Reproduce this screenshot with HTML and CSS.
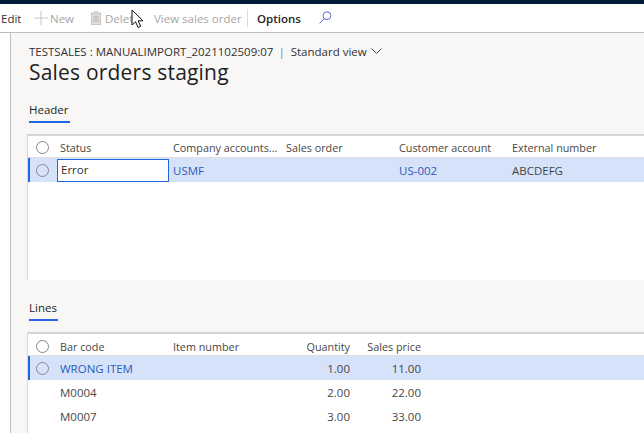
FILE: index.html
```html
<!DOCTYPE html>
<html lang="en">
<head>
    <meta charset="UTF-8">
    <title>Sales orders staging</title>
    <link rel="stylesheet" href="styles.css">
</head>
<body>
<div class="topBar"></div>
<div class="toolbar">
    <span class="toolItem editItem">Edit</span>
    <span class="toolItem newItem disabled">
        <svg class="plusIcon" width="14" height="14" viewBox="0 0 14 14"><path d="M7 0V14M0 7H14" stroke="#c8c6c4" stroke-width="1" fill="none"/></svg>
        New
    </span>
    <span class="toolItem deleteItem disabled">
        <svg class="binIcon" width="12" height="14" viewBox="0 0 12 14"><path d="M4 0.5H8M0.5 2H11.5" stroke="#c8c6c4" fill="none"/><rect x="1.5" y="2.5" width="9" height="11" fill="#e3e2e0" stroke="#c8c6c4"/><path d="M4 4.5V11.5M6 4.5V11.5M8 4.5V11.5" stroke="#b8b6b4" fill="none"/></svg>
        Delete
    </span>
    <span class="toolItem viewItem disabled">View sales order</span>
    <span class="toolDivider"></span>
    <span class="toolItem optionsItem">Options</span>
    <svg class="searchIcon" width="13" height="13" viewBox="0 0 13 13"><circle cx="8" cy="4.7" r="3.9" stroke="#5a6fd8" fill="none"/><path d="M5.2 7.6L0.6 12.4" stroke="#5a6fd8" fill="none"/></svg>
</div>
<div class="pageBody">
    <div class="content">
        <div class="breadcrumb">
            <span>TESTSALES : MANUALIMPORT_2021102509:07</span>
            <span class="crumbBar">|</span>
            <span>Standard view</span>
            <svg width="11" height="6" viewBox="0 0 11 6"><path d="M0.5 0.5L5.5 5.5L10.5 0.5" stroke="#444" fill="none"/></svg>
        </div>
        <h1 class="pageTitle">Sales orders staging</h1>

        <div class="tabHead headerTab"><span class="tabLabel">Header</span></div>
        <div class="grid headerGrid">
            <div class="gridRow headRow">
                <span class="radio"></span>
                <span class="cell w113">Status</span>
                <span class="cell w113">Company accounts...</span>
                <span class="cell w113">Sales order</span>
                <span class="cell w113">Customer account</span>
                <span class="cell">External number</span>
            </div>
            <div class="gridRow activeRow">
                <span class="radio"></span>
                <span class="cell w113"><span class="editBox">Error</span></span>
                <span class="cell w113 link">USMF</span>
                <span class="cell w113"></span>
                <span class="cell w113 link">US-002</span>
                <span class="cell">ABCDEFG</span>
            </div>
        </div>

        <div class="tabHead linesTab"><span class="tabLabel">Lines</span></div>
        <div class="grid linesGrid">
            <div class="gridRow headRow">
                <span class="radio"></span>
                <span class="cell w113">Bar code</span>
                <span class="cell w113">Item number</span>
                <span class="cell qty">Quantity</span>
                <span class="cell price">Sales price</span>
            </div>
            <div class="gridRow activeRow">
                <span class="radio"></span>
                <span class="cell w113 link">WRONG ITEM</span>
                <span class="cell w113"></span>
                <span class="cell qty">1.00</span>
                <span class="cell price">11.00</span>
            </div>
            <div class="gridRow">
                <span class="radioSpace"></span>
                <span class="cell w113">M0004</span>
                <span class="cell w113"></span>
                <span class="cell qty">2.00</span>
                <span class="cell price">22.00</span>
            </div>
            <div class="gridRow">
                <span class="radioSpace"></span>
                <span class="cell w113">M0007</span>
                <span class="cell w113"></span>
                <span class="cell qty">3.00</span>
                <span class="cell price">33.00</span>
            </div>
        </div>
    </div>
</div>
<svg class="cursor" width="14" height="21" viewBox="0 0 14 21"><path d="M1 1V16L4.6 12.8L7 18.5L9.6 17.4L7.2 11.8H12Z" fill="#fff" stroke="#111" stroke-width="1"/></svg>
</body>
</html>
```

FILE: styles.css
```css
html, body {
    margin: 0;
    padding: 0;
    height: 433px;
    overflow: hidden;
}

body {
    font-family: 'Open Sans', 'Liberation Sans', sans-serif;
    font-size: 10.8px;
    color: #323130;
    background-color: #fff;
    position: relative;
}

.topBar {
    height: 4px;
    background-color: #001a38;
}

.toolbar {
    height: 28px;
    display: flex;
    align-items: center;
    border-bottom: 1px solid #bdbdbd;
    background-color: #fff;
    white-space: nowrap;
    font-size: 11.5px;
}

.toolItem {
    display: flex;
    align-items: center;
}

.disabled {
    color: #a6a6a6;
}

.editItem {
    margin-left: 1px;
    width: 33px;
}

.plusIcon {
    margin-right: 2px;
}

.newItem {
    width: 56px;
}

.binIcon {
    margin-right: 3px;
}

.deleteItem {
    width: 64px;
}

.viewItem {
    width: 93px;
}

.toolDivider {
    width: 1px;
    height: 18px;
    background-color: #dcdcdc;
    margin-right: 9px;
}

.optionsItem {
    color: #252423;
    font-weight: 600;
    width: 62px;
}

.pageBody {
    height: 400px;
    padding-left: 10px;
}

.content {
    height: 100%;
    border-left: 1px solid #bdbdbd;
    background-color: #f8f7f6;
    padding-left: 16px;
    overflow: hidden;
}

.breadcrumb {
    display: flex;
    align-items: center;
    height: 14px;
    margin: 11px 0 0 2px;
    font-size: 11.5px;
    white-space: nowrap;
}

.crumbBar {
    color: #4a90d9;
    margin: 0 6px 0 5px;
}

.breadcrumb svg {
    margin-left: 4px;
}

.pageTitle {
    margin: 0 0 0 2px;
    height: 30px;
    line-height: 29px;
    font-size: 21px;
    font-weight: 400;
    color: #201f1e;
    letter-spacing: 0.2px;
}

.tabHead {
    font-size: 11.5px;
    color: #201f1e;
    padding-left: 2px;
}

.headerTab {
    margin-top: 14px;
    height: 32px;
}

.linesTab {
    margin-top: 20px;
    height: 32px;
}

.tabLabel {
    display: inline-block;
    height: 19px;
    line-height: 16px;
    border-bottom: 2px solid #2266e3;
    padding-right: 1px;
}

.grid {
    background-color: #fff;
    border-top: 2px solid #d6d5d3;
    border-left: 1px solid #d6d5d3;
    width: 617px;
    box-sizing: border-box;
}

.headerGrid {
    height: 146px;
}

.linesGrid {
    height: 102px;
}

.gridRow {
    display: flex;
    align-items: center;
    height: 24px;
    color: #484644;
}

.headRow {
    box-sizing: border-box;
    height: 22px;
    padding-top: 1px;
    border-bottom: 1px solid #e1dfdd;
}

.linesGrid .headRow {
    padding-top: 3px;
}

.activeRow {
    background-color: #d5e2f9;
    box-shadow: inset 2px 0 0 #2266e3;
}

.radio {
    width: 11px;
    height: 11px;
    border: 1px solid #8a8886;
    border-radius: 50%;
    margin: 0 11px 0 8px;
    flex: none;
}

.radioSpace {
    width: 32px;
    flex: none;
}

.cell {
    white-space: nowrap;
}

.w113 {
    width: 113px;
    flex: none;
}

.gridRow:not(.headRow) .cell {
    font-size: 11.5px;
}

.link {
    color: #2b5bb8;
}

.editBox {
    display: block;
    width: 107px;
    height: 21px;
    line-height: 20px;
    border: 1px solid #2266e3;
    background-color: #fff;
    padding-left: 3px;
    margin-left: -3px;
    color: #323130;
}

.qty {
    width: 64px;
    text-align: right;
    flex: none;
}

.price {
    width: 71px;
    text-align: right;
    flex: none;
}

.searchIcon {
    margin-top: -2px;
}

.cursor {
    position: absolute;
    left: 131px;
    top: 9px;
}
```
